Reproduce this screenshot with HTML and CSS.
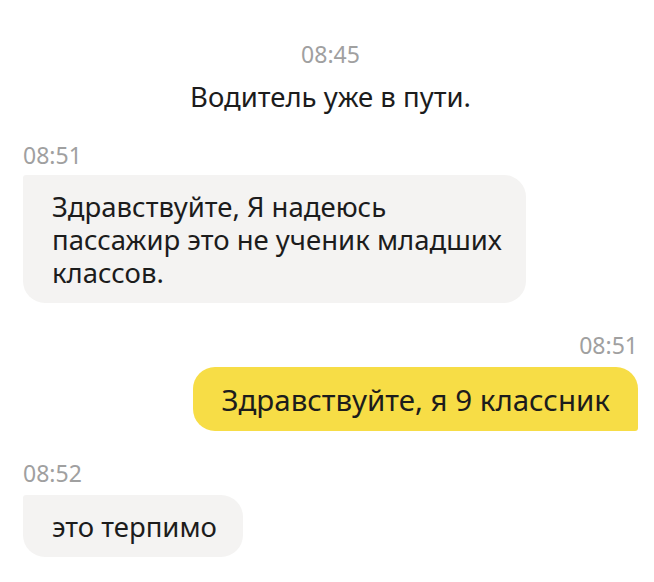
FILE: index.html
```html
<!DOCTYPE html>
<html lang="ru">
<head>
  <meta charset="UTF-8">
  <meta name="viewport" content="width=device-width, initial-scale=1.0">
  <title>Чат с водителем</title>
  <link rel="stylesheet" href="styles.css">
</head>
<body>
  <div class="chat">
    <!-- System notice -->
    <div class="notice">
      <div class="time">08:45</div>
      <div class="notice-text">Водитель уже в пути.</div>
    </div>

    <div class="message incoming">
      <div class="time">08:51</div>
      <div class="bubble">Здравствуйте, Я надеюсь пассажир это не ученик младших классов.</div>
    </div>

    <div class="message outgoing">
      <div class="time">08:51</div>
      <div class="bubble">Здравствуйте, я 9 классник</div>
    </div>

    <div class="message incoming">
      <div class="time">08:52</div>
      <div class="bubble short">это терпимо</div>
    </div>
  </div>
</body>
</html>
```

FILE: styles.css
```css
/* Chat Styles */
body {
  margin: 0;
  background-color: #fff;
  font-family: "Noto Sans", Arial, sans-serif;
  color: #1c1c1c;
}

.chat {
  display: flex;
  flex-direction: column;
  padding: 44px 16px 0 23px;
}

.time {
  font-size: 23px;
  line-height: 20px;
  color: #a0a0a0;
}

.notice {
  display: flex;
  flex-direction: column;
  align-items: center;
  gap: 16px;
}

.notice-text {
  font-size: 27.5px;
  line-height: 33px;
}

.message {
  display: flex;
  flex-direction: column;
  gap: 10px;
  margin-top: 32px;
}

.message.outgoing {
  align-items: flex-end;
  gap: 12px;
}

.message.incoming {
  align-items: flex-start;
}

.outgoing + .incoming {
  gap: 12px;
}

.bubble {
  font-size: 29.5px;
  line-height: 33px;
  padding: 15px 29px 14px;
  border-radius: 22px;
  box-sizing: border-box;
}

.incoming .bubble {
  max-width: 503px;
  font-size: 27.5px;
  padding-right: 8px;
  background-color: #f4f3f2;
  border-top-left-radius: 3px;
}

.incoming .bubble.short {
  padding-right: 26px;
}

.outgoing .bubble {
  background-color: #f7dd46;
  border-bottom-right-radius: 3px;
  padding: 16px 28px 15px 28px;
}
```
